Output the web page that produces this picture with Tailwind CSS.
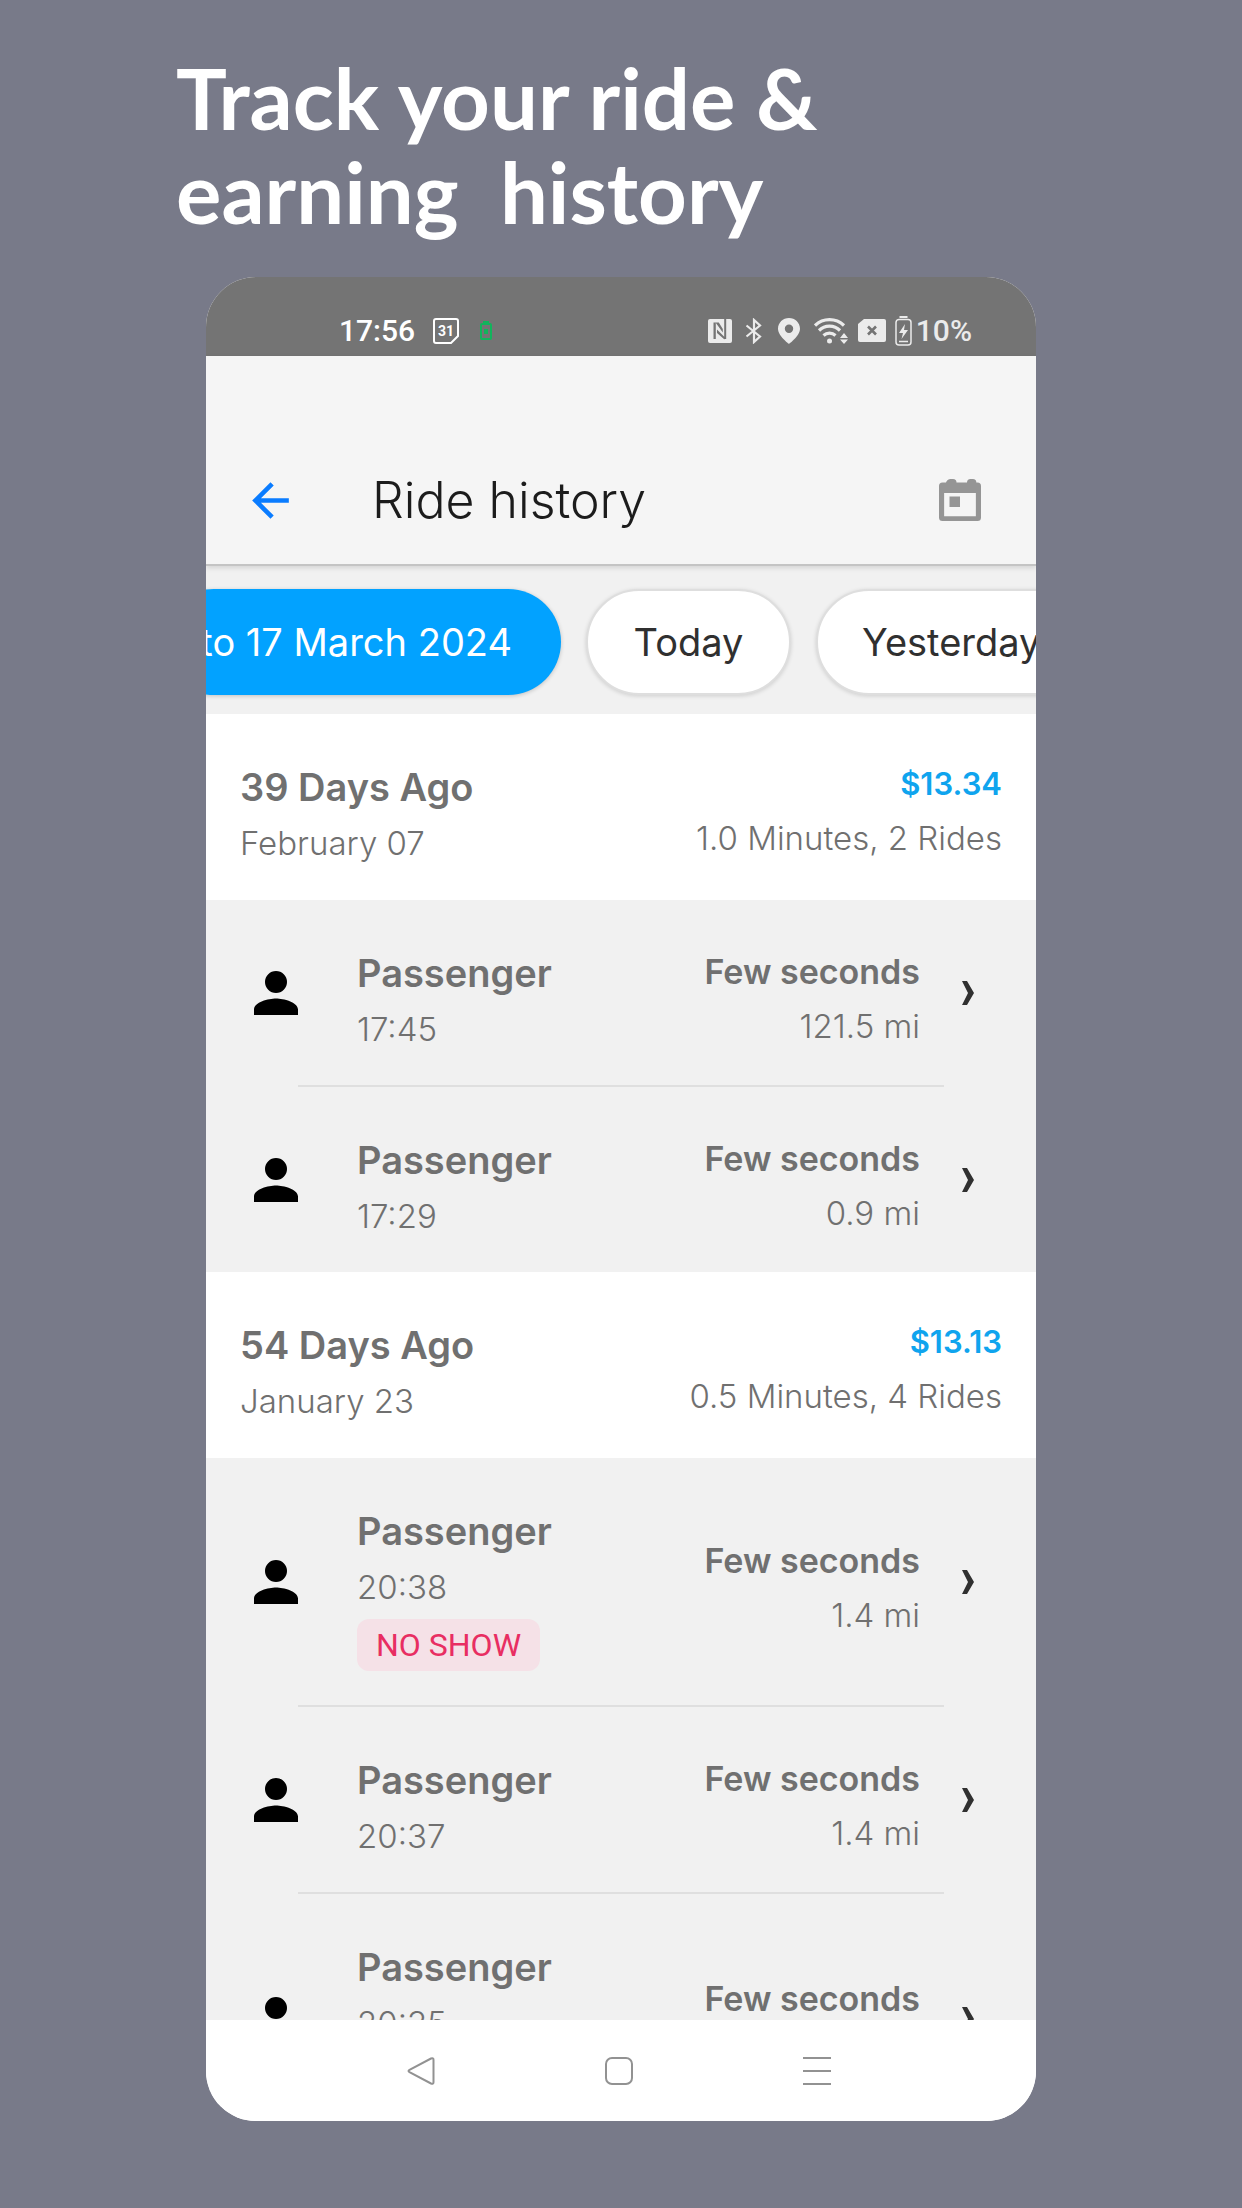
<!DOCTYPE html>
<html lang="en">
<head>
<meta charset="utf-8">
<meta name="viewport" content="width=device-width, initial-scale=1">
<title>Ride history</title>
<script src="https://cdn.jsdelivr.net/npm/@tailwindcss/browser@4"></script>
</head>
<body class="bg-[#787a89] font-['Inter',sans-serif] text-[#707070]">
<svg class="hidden" aria-hidden="true">
  <symbol id="person" viewBox="0 0 24 24"><path d="M12 12a4 4 0 1 0 0-8 4 4 0 0 0 0 8zm0 2c-2.67 0-8 1.34-8 4v2h16v-2c0-2.66-5.33-4-8-4z"/></symbol>
  <symbol id="chevron" viewBox="0 0 12 24"><path d="M0 0h5l7 12-7 12H0l6-12z"/></symbol>
</svg>
<div class="flex h-screen flex-col overflow-hidden pb-[87px]">
  <h1 class="mx-auto w-full max-w-[890px] pt-[50px] pb-[39px] font-['Lato',sans-serif] text-[85px] leading-[94px] font-bold whitespace-pre text-white">Track your ride &amp;
earning  history</h1>

  <div class="mx-auto flex min-h-0 w-full max-w-[830px] flex-1 flex-col overflow-hidden rounded-[50px] bg-white">
    <!-- Status bar -->
    <div class="flex h-[79px] shrink-0 items-center bg-[#747474] pt-[28px] pr-[64px] pl-[133px] font-['Roboto',sans-serif] text-[30px] font-medium text-white">
      <span>17:56</span>
      <svg class="ml-[18px] h-[26px] w-[26px]" viewBox="0 0 26 26" fill="none" stroke="#fff" stroke-width="2"><path d="M3 1h20a2 2 0 0 1 2 2v15l-7 7H3a2 2 0 0 1-2-2V3a2 2 0 0 1 2-2z"/><text x="13" y="18" text-anchor="middle" font-family="Roboto" font-size="14" font-weight="700" fill="#fff" stroke="none">31</text></svg>
      <svg class="ml-5 h-5 w-[14px]" viewBox="0 0 14 20" fill="none" stroke="#12b45c" stroke-width="2"><rect x="2" y="3" width="10" height="15" rx="1"/><path d="M4 0h6v3H4zM5 8h4v5H5z" fill="#12b45c" stroke="none"/></svg>
      <div class="ml-auto flex items-center text-[#ebebeb]">
        <svg class="h-[26px] w-6" viewBox="0 0 24 26"><rect y="1" width="24" height="24" rx="2" fill="currentColor"/><path d="M5.500 4.500h2.300V21H5.500zM16.200 1h2v20h-2zM7.500 4.500h3.300l4 6.500v3.500zM9 11.500l7.500 7.500v2.500L9 15z" fill="#747474"/></svg>
        <svg class="ml-[13px] h-[26px] w-[18px]" viewBox="0 0 18 26" fill="none" stroke="currentColor" stroke-width="2.200"><path d="M1.500 7.500 15 18.500l-6 5.500V2l6 5.500L1.500 18.500"/></svg>
        <svg class="ml-[15px] h-[26px] w-[22px]" viewBox="0 0 22 26" fill="currentColor" fill-rule="evenodd"><path d="M11 0C5 0 0 4.700 0 10.800 0 18 11 26 11 26s11-8 11-15.200C22 4.700 17 0 11 0zm0 6.500a4.200 4.200 0 1 1 0 8.400 4.200 4.200 0 0 1 0-8.400z"/></svg>
        <svg class="ml-[14px] h-[26px] w-[34px]" viewBox="0 0 34 26" fill="none" stroke="currentColor" stroke-width="3.200"><path d="M1 7.500a21 21 0 0 1 29 0M5 12.500a15 15 0 0 1 21 0M9.500 17.500a9 9 0 0 1 12 0"/><circle cx="15.500" cy="23" r="2.500" fill="currentColor" stroke="none"/><path d="M30 15l4 5h-8zM30 26l4-4.500h-8z" fill="currentColor" stroke="none"/></svg>
        <svg class="ml-[10px] h-[23px] w-7" viewBox="0 0 28 23"><path d="M6 0h20a2 2 0 0 1 2 2v19a2 2 0 0 1-2 2H2a2 2 0 0 1-2-2V5z" fill="currentColor"/><path d="M10 7.500l8 8M18 7.500l-8 8" stroke="#747474" stroke-width="2.600"/></svg>
        <svg class="ml-[9px] h-[30px] w-[17px]" viewBox="0 0 17 30" fill="none" stroke="currentColor" stroke-width="1.500"><path d="M4.500 1h8" stroke-width="2"/><rect x="1" y="3.500" width="15" height="25.500" rx="3"/><path d="M4 25.500h9"/><path d="M10 8l-6 9h4l-1.500 6L13 14H9z" fill="currentColor" stroke="none"/></svg>
        <span class="ml-1">10%</span>
      </div>
    </div>

    <!-- Title bar -->
    <header class="relative z-10 flex h-[210px] shrink-0 items-center border-b-2 border-[#c4c4c4] bg-[#f5f5f5] pt-[80px] pr-[48px] pl-[37px] shadow-[0_2px_5px_rgba(0,0,0,0.12)]">
      <button type="button" aria-label="Back"><svg class="h-[55px] w-[55px] fill-[#0a7cff]" viewBox="0 0 24 24"><path d="M20 11H7.830l5.590-5.590L12 4l-8 8 8 8 1.410-1.410L7.830 13H20z"/></svg></button>
      <h2 class="ml-[74px] text-[50px] font-light text-[#1c1c1c]">Ride history</h2>
      <button type="button" aria-label="Choose dates" class="ml-auto"><svg class="h-14 w-14 fill-[#959595]" viewBox="0 0 24 24"><path fill-rule="evenodd" d="M19.500 4.500H19Q19 3 17.500 3h-1Q15 3 15 4.500H10.500Q10.500 3 9 3H8Q6.500 3 6 4.500H4.500A1.500 1.500 0 0 0 3 6v13.500A1.500 1.500 0 0 0 4.500 21h15a1.500 1.500 0 0 0 1.500-1.500V6a1.500 1.500 0 0 0-1.500-1.500zM18.800 19H5.200V9h13.600zM7.500 10.500h4.500v4.500h-4.500z"/></svg></button>
    </header>

    <!-- Date filters -->
    <div class="flex h-[148px] shrink-0 items-center gap-[25px] overflow-hidden bg-[#f1f1f1] pt-1 text-[38px] whitespace-nowrap text-[#303030]">
      <button type="button" class="-ml-[45px] h-[106px] w-[400px] shrink-0 rounded-full bg-[#02a2ff] pr-[49px] text-right text-white shadow-[0_1px_4px_rgba(0,0,0,0.2)]">to 17 March 2024</button>
      <button type="button" class="h-[106px] w-[205px] shrink-0 rounded-full border-2 border-[#dedede] bg-white shadow-[0_1px_4px_rgba(0,0,0,0.15)]">Today</button>
      <button type="button" class="h-[106px] shrink-0 rounded-full border-2 border-[#dedede] bg-white px-[44px] shadow-[0_1px_4px_rgba(0,0,0,0.15)]">Yesterday</button>
    </div>

    <!-- Rides -->
    <main class="min-h-0 flex-1 overflow-hidden bg-[#f1f1f1] text-[33px] leading-[48px] font-light">
      <section>
        <div class="flex h-[186px] justify-between bg-white px-[34px]">
          <div class="flex flex-col gap-2 pt-[49px]"><h3 class="text-[38px] font-semibold">39 Days Ago</h3><p>February 07</p></div>
          <div class="flex flex-col gap-[6px] pt-[46px] text-right"><p class="text-[31px] font-semibold text-[#0fa4ee]">$13.34</p><p>1.0 Minutes, 2 Rides</p></div>
        </div>
        <a href="#" class="flex h-[185px] items-center pr-[62px] pl-[37px]">
          <svg class="h-[66px] w-[66px] fill-black"><use href="#person"/></svg>
          <div class="ml-[48px] flex flex-col gap-2 self-start pt-[49px]"><h4 class="text-[38px] font-semibold">Passenger</h4><p>17:45</p></div>
          <div class="ml-auto flex flex-col gap-[6px] pt-3 text-right"><p class="text-[34px] font-semibold">Few seconds</p><p>121.5 mi</p></div>
          <svg class="ml-[42px] h-6 w-3 fill-[#303030]"><use href="#chevron"/></svg>
        </a>
        <hr class="mx-[92px] border-t-2 border-[#dfdfdf]">
        <a href="#" class="flex h-[185px] items-center pr-[62px] pl-[37px]">
          <svg class="h-[66px] w-[66px] fill-black"><use href="#person"/></svg>
          <div class="ml-[48px] flex flex-col gap-2 self-start pt-[49px]"><h4 class="text-[38px] font-semibold">Passenger</h4><p>17:29</p></div>
          <div class="ml-auto flex flex-col gap-[6px] pt-3 text-right"><p class="text-[34px] font-semibold">Few seconds</p><p>0.9 mi</p></div>
          <svg class="ml-[42px] h-6 w-3 fill-[#303030]"><use href="#chevron"/></svg>
        </a>
      </section>
      <section>
        <div class="flex h-[186px] justify-between bg-white px-[34px]">
          <div class="flex flex-col gap-2 pt-[49px]"><h3 class="text-[38px] font-semibold">54 Days Ago</h3><p>January 23</p></div>
          <div class="flex flex-col gap-[6px] pt-[46px] text-right"><p class="text-[31px] font-semibold text-[#0fa4ee]">$13.13</p><p>0.5 Minutes, 4 Rides</p></div>
        </div>
        <a href="#" class="flex h-[247px] items-center pr-[62px] pl-[37px]">
          <svg class="h-[66px] w-[66px] fill-black"><use href="#person"/></svg>
          <div class="ml-[48px] flex flex-col gap-2 self-start pt-[49px]"><h4 class="text-[38px] font-semibold">Passenger</h4><p>20:38</p><span class="self-start rounded-xl bg-[#f5e1e7] px-[19px] py-[2px] font-['Roboto',sans-serif] text-[32px] font-normal text-[#e82e62]">NO SHOW</span></div>
          <div class="ml-auto flex flex-col gap-[6px] pt-3 text-right"><p class="text-[34px] font-semibold">Few seconds</p><p>1.4 mi</p></div>
          <svg class="ml-[42px] h-6 w-3 fill-[#303030]"><use href="#chevron"/></svg>
        </a>
        <hr class="mx-[92px] border-t-2 border-[#dfdfdf]">
        <a href="#" class="flex h-[185px] items-center pr-[62px] pl-[37px]">
          <svg class="h-[66px] w-[66px] fill-black"><use href="#person"/></svg>
          <div class="ml-[48px] flex flex-col gap-2 self-start pt-[49px]"><h4 class="text-[38px] font-semibold">Passenger</h4><p>20:37</p></div>
          <div class="ml-auto flex flex-col gap-[6px] pt-3 text-right"><p class="text-[34px] font-semibold">Few seconds</p><p>1.4 mi</p></div>
          <svg class="ml-[42px] h-6 w-3 fill-[#303030]"><use href="#chevron"/></svg>
        </a>
        <hr class="mx-[92px] border-t-2 border-[#dfdfdf]">
        <a href="#" class="flex h-[249px] items-center pr-[62px] pl-[37px]">
          <svg class="h-[66px] w-[66px] fill-black"><use href="#person"/></svg>
          <div class="ml-[48px] flex flex-col gap-2 self-start pt-[49px]"><h4 class="text-[38px] font-semibold">Passenger</h4><p>20:35</p></div>
          <p class="ml-auto pb-10 text-[34px] font-semibold">Few seconds</p>
          <svg class="ml-[42px] h-6 w-3 fill-[#303030]"><use href="#chevron"/></svg>
        </a>
      </section>
    </main>

    <!-- System navigation -->
    <nav class="flex h-[101px] shrink-0 items-center justify-center gap-[170px] bg-white pr-1">
      <button type="button" aria-label="Back"><svg class="h-7 w-7" viewBox="0 0 28 28" fill="none" stroke="#929292" stroke-width="2"><path d="M2.500 12.800 24 1.500q2.500-1 2.500 1.200v22.600q0 2.200-2.500 1.200L2.500 15.200q-2-1.200 0-2.400z"/></svg></button>
      <button type="button" aria-label="Home"><svg class="h-7 w-7" viewBox="0 0 28 28" fill="none" stroke="#929292" stroke-width="2"><rect x="1" y="1" width="26" height="26" rx="6"/></svg></button>
      <button type="button" aria-label="Recent apps"><svg class="h-7 w-7" viewBox="0 0 28 28" stroke="#929292" stroke-width="2"><path d="M0 1h28M0 14h28M0 27h28"/></svg></button>
    </nav>
  </div>
</div>
</body>
</html>
